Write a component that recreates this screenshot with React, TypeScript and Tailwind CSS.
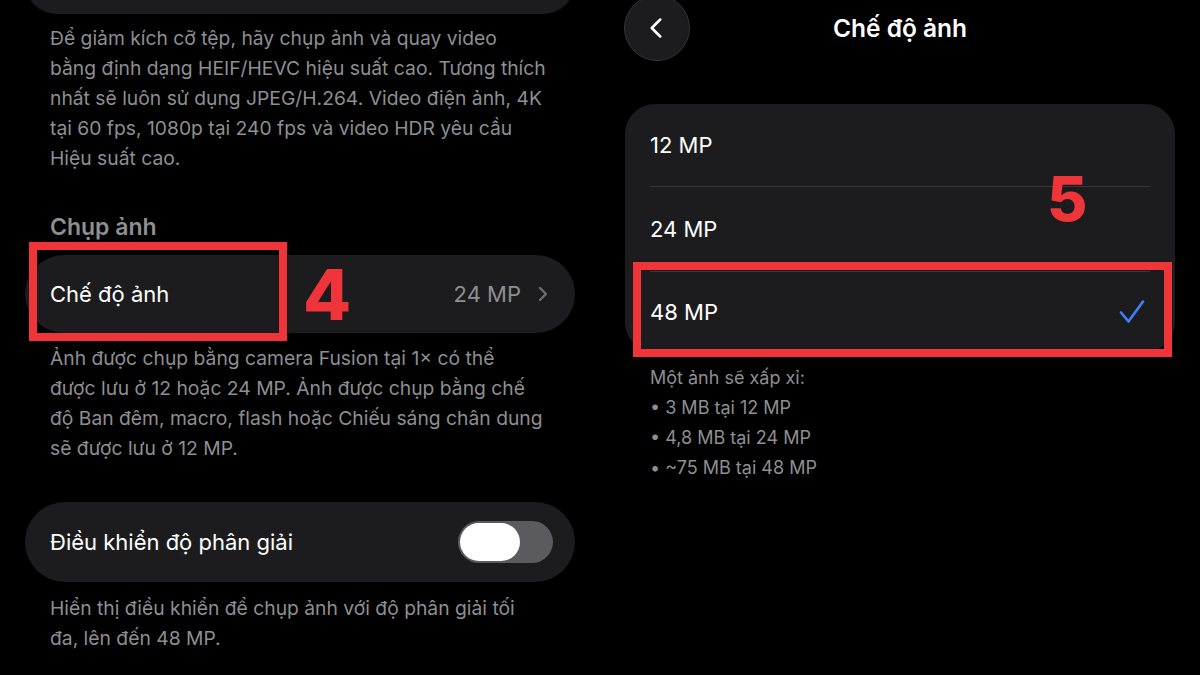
import { ChevronLeft, ChevronRight } from "lucide-react";

const font = "font-['Inter','Noto_Sans',sans-serif]";

function Note({ children, className = "" }: { children: React.ReactNode; className?: string }) {
    return <p className={`px-[25px] text-[19.3px] leading-[30px] text-[#8e8e93] ${className}`}>{children}</p>;
}

function RedBox({ className }: { className: string }) {
    return <div className={`absolute border-[8px] border-[#f0353a] pointer-events-none ${className}`} />;
}

function Mark({ n, className }: { n: string; className: string }) {
    return (
        <span className={`absolute font-['Inter',sans-serif] font-extrabold leading-none text-[#f0353a] ${className}`}>
            {n}
        </span>
    );
}

function SettingsPane() {
    return (
        <div className="w-[600px] px-[25px] flex flex-col">
            <div className="h-[70px] -mt-[56px] rounded-[32px] bg-[#1c1c1e]" />

            <Note className="mt-[9px]">
                Để giảm kích cỡ tệp, hãy chụp ảnh và quay video<br />
                bằng định dạng HEIF/HEVC hiệu suất cao. Tương thích<br />
                nhất sẽ luôn sử dụng JPEG/H.264. Video điện ảnh, 4K<br />
                tại 60 fps, 1080p tại 240 fps và video HDR yêu cầu<br />
                Hiệu suất cao.
            </Note>

            <h2 className="mt-[39px] px-[25px] text-[23px] leading-[30px] font-semibold text-[#8e8e93]">Chụp ảnh</h2>

            <div className="relative mt-[13px] h-[78px] rounded-full bg-[#1c1c1e] flex items-center pl-[25px] pr-[20px]">
                <span className="text-[22px] text-white">Chế độ ảnh</span>
                <span className="ml-auto text-[22px] text-[#8e8e93]">24 MP</span>
                <ChevronRight size={24} strokeWidth={2.4} className="ml-[10px] text-[#6d6d72]" />
                <RedBox className="left-[4px] -top-[13px] w-[258px] h-[99px]" />
                <Mark n="4" className="left-[278px] top-[5px] text-[70px]" />
            </div>

            <Note className="mt-[10px]">
                Ảnh được chụp bằng camera Fusion tại 1× có thể<br />
                được lưu ở 12 hoặc 24 MP. Ảnh được chụp bằng chế<br />
                độ Ban đêm, macro, flash hoặc Chiếu sáng chân dung<br />
                sẽ được lưu ở 12 MP.
            </Note>

            <div className="mt-[39px] h-[80px] rounded-full bg-[#1c1c1e] flex items-center pl-[25px] pr-[22px]">
                <span className="text-[22px] text-white">Điều khiển độ phân giải</span>
                <div className="ml-auto w-[95px] h-[42px] rounded-full bg-[#5b5b5f] p-[2px] flex items-center">
                    <div className="w-[60px] h-[38px] rounded-full bg-white" />
                </div>
            </div>

            <Note className="mt-[11px]">
                Hiển thị điều khiển để chụp ảnh với độ phân giải tối<br />
                đa, lên đến 48 MP.
            </Note>
        </div>
    );
}

const options = ["12 MP", "24 MP", "48 MP"];

function ResolutionPane() {
    return (
        <div className="w-[600px] flex flex-col">
            <div className="-mt-[5px] px-[24px] grid grid-cols-[1fr_auto_1fr] items-center">
                <div className="w-[66px] h-[66px] rounded-full bg-[#1c1c1e] border border-[#333336] flex items-center justify-center">
                    <ChevronLeft size={34} strokeWidth={1.8} className="text-white -ml-[2px]" />
                </div>
                <h1 className="text-[24.5px] font-semibold text-white">Chế độ ảnh</h1>
                <div />
            </div>

            <div className="relative mx-[25px] mt-[43px] rounded-[30px] bg-[#1c1c1e]">
                {options.map((o, i) => (
                    <div
                        key={o}
                        className={`mx-[25px] flex items-center ${i === 0 ? "h-[83px] border-b border-[#38383a]" : i === 1 ? "h-[85px] border-b border-[#38383a]" : "h-[80px]"}`}
                    >
                        <span className="text-[22px] text-white">{o}</span>
                        {i === 2 && (
                            <svg width="26" height="24" viewBox="0 0 26 24" className="ml-auto mr-[5px]">
                                <path d="M2 12.5 L9.5 21.5 L24 1.5" fill="none" stroke="#3a82f7" strokeWidth="2.6" strokeLinecap="round" strokeLinejoin="round" />
                            </svg>
                        )}
                    </div>
                ))}
                <RedBox className="left-[8px] top-[158px] w-[539px] h-[95px]" />
                <Mark n="5" className="left-[422px] top-[64px] text-[62px]" />
            </div>

            <div className="mt-[11px] px-[50px] text-[18px] leading-[30px] text-[#8e8e93]">
                <p>Một ảnh sẽ xấp xỉ:</p>
                <p>• 3 MB tại 12 MP</p>
                <p>• 4,8 MB tại 24 MP</p>
                <p>• ~75 MB tại 48 MP</p>
            </div>
        </div>
    );
}

export default function App() {
    return (
        <div className={`w-[1200px] h-[675px] bg-black flex overflow-hidden ${font}`}>
            <SettingsPane />
            <ResolutionPane />
        </div>
    );
}
